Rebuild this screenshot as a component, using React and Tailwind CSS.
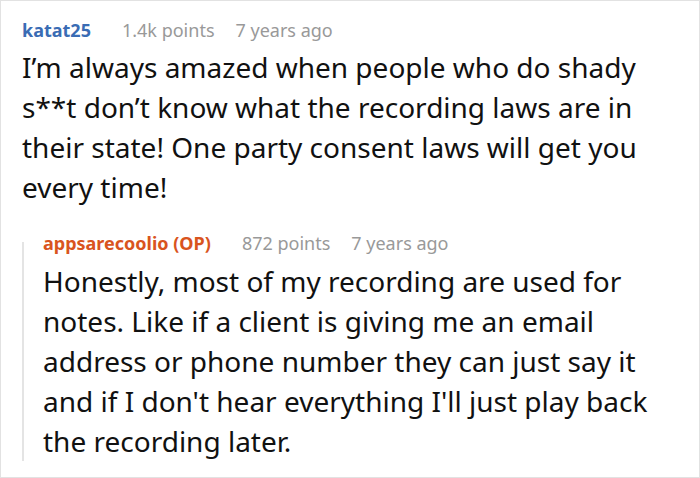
import React from 'react';

const Meta = ({ name, nameClass, points, ago }) => (
  <div className="flex items-baseline text-[18px] leading-[24px]">
    <span className={`font-bold ${nameClass}`}>{name}</span>
    <span className="ml-[31px] text-[#999999]">{points}</span>
    <span className="ml-[21px] text-[#999999]">{ago}</span>
  </div>
);

export default function App() {
  return (
    <div
      className="w-[700px] h-[478px] bg-white border border-[#e2e2e2] pl-[21px] pr-[20px] pt-[17px] text-[#111111] overflow-hidden"
      style={{ fontFamily: '"Noto Sans", "Open Sans", sans-serif' }}
    >
      <Meta name="katat25" nameClass="text-[#3a6cb4]" points="1.4k points" ago="7 years ago" />
      <p className="mt-[5px] text-[28px] leading-[40px]">
        I’m always amazed when people who do shady s**t don’t know what the recording laws are in
        their state! One party consent laws will get you every time!
      </p>

      {/* reply */}
      <div className="mt-[24px] flex">
        <div className="mt-[11px] w-[2px] shrink-0 bg-[#e4e4e4]" />
        <div className="ml-[19px] flex-1">
          <Meta
            name="appsarecoolio (OP)"
            nameClass="text-[#d9541e]"
            points="872 points"
            ago="7 years ago"
          />
          <p className="mt-[6px] text-[28px] leading-[40px]">
            Honestly, most of my recording are used for notes. Like if a client is giving me an
            email address or phone number they can just say it and if I don't hear everything I'll
            just play back the recording later.
          </p>
        </div>
      </div>
    </div>
  );
}
